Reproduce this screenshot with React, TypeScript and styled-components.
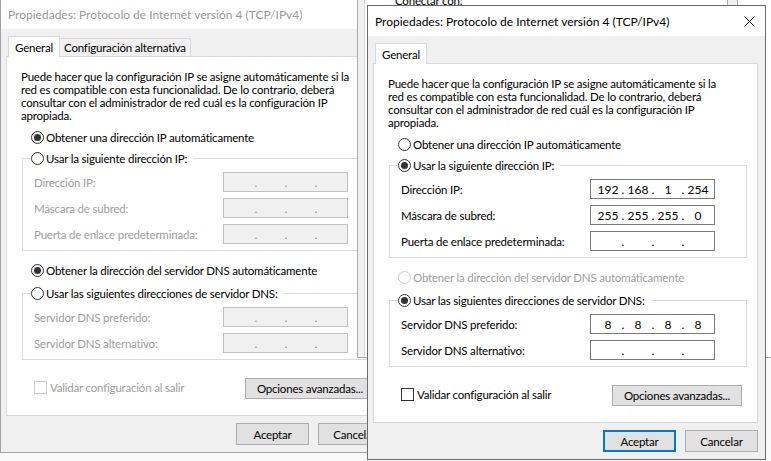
import React from "react";
import styled, { createGlobalStyle } from "styled-components";

const Global = createGlobalStyle`
  html, body { margin: 0; padding: 0; }
  body {
    width: 771px; height: 461px; overflow: hidden; background: #f9f9f9;
    font-family: Lato, "Noto Sans", sans-serif; font-size: 11.5px; letter-spacing: -0.2px; color: #000;
  }
  #root { width: 771px; height: 461px; }
`;

const Desktop = styled.div`
  position: relative;
  width: 771px;
  height: 461px;
  overflow: hidden;
`;

const Window = styled.div<{ $x: number; $y: number; $z: number; $active?: boolean }>`
  position: absolute;
  left: ${(p) => p.$x}px;
  top: ${(p) => p.$y}px;
  z-index: ${(p) => p.$z};
  width: 399px;
  height: 455px;
  box-sizing: border-box;
  border: 1px solid ${(p) => (p.$active ? "#6b6b6b" : "#a3a3a3")};
  background: #f0f0f0;
  display: flex;
  flex-direction: column;
`;

const TitleBar = styled.div<{ $active?: boolean }>`
  flex: none;
  height: 30px;
  background: #fff;
  display: flex;
  align-items: center;
  padding: 0 10px 0 7px;
  font-size: 12px;
  letter-spacing: 0;
  color: ${(p) => (p.$active ? "#000" : "#9a9a9a")};
  white-space: nowrap;
`;

const TitleText = styled.span`
  flex: 1;
`;

const Body = styled.div`
  flex: 1;
  display: flex;
  flex-direction: column;
  padding: 7px 7px 0 5px;
`;

const TabStrip = styled.div`
  display: flex;
  align-items: flex-end;
  height: 21px;
  margin-bottom: -1px;
  padding-left: 2px;
  position: relative;
  z-index: 1;
`;

const Tab = styled.div<{ $selected?: boolean }>`
  box-sizing: border-box;
  display: flex;
  align-items: center;
  white-space: nowrap;
  border: 1px solid #d9d9d9;
  ${(p) =>
    p.$selected
      ? `height: 21px; padding: 0 6px; background: #fff; border-bottom: none;`
      : `height: 18px; margin-bottom: 1px; padding: 0 4px; background: #f0f0f0; border-left: none; border-bottom: none;`}
`;

const Panel = styled.div`
  height: 360px;
  box-sizing: border-box;
  background: #fff;
  border: 1px solid #d9d9d9;
  padding: 13px 10px 0 14px;
  display: flex;
  flex-direction: column;
`;

const Description = styled.p`
  margin: 0;
  line-height: 13px;
  white-space: nowrap;
`;

const OptionLine = styled.div<{ $mt: number }>`
  margin: ${(p) => p.$mt}px 0 0 10px;
`;

const RadioRow = styled.div<{ $disabled?: boolean }>`
  display: flex;
  align-items: center;
  gap: 2px;
  height: 16px;
  white-space: nowrap;
  color: ${(p) => (p.$disabled ? "#a0a0a0" : "#000")};
`;

const RadioCircle = styled.span<{ $disabled?: boolean }>`
  flex: none;
  box-sizing: border-box;
  width: 13px;
  height: 13px;
  border-radius: 50%;
  border: 1px solid ${(p) => (p.$disabled ? "#cccccc" : "#333333")};
  background: #fff;
  display: flex;
  align-items: center;
  justify-content: center;
`;

const RadioDot = styled.span`
  width: 7px;
  height: 7px;
  border-radius: 50%;
  background: #333;
`;

const Group = styled.fieldset<{ $mt: number }>`
  margin: ${(p) => p.$mt}px 0 0 1px;
  padding: 0;
  border: 1px solid #dcdcdc;
  min-width: 0;
`;

const GroupLegend = styled.legend`
  margin-left: 8px;
  padding: 0 6px 0 0;
`;

const FieldGrid = styled.div`
  display: grid;
  grid-template-columns: 189px 125px;
  grid-auto-rows: 20px;
  row-gap: 6px;
  align-items: center;
  margin-top: 6px;
  padding: 0 0 6px 11px;
`;

const FieldLabel = styled.span<{ $disabled?: boolean }>`
  white-space: nowrap;
  color: ${(p) => (p.$disabled ? "#a0a0a0" : "#000")};
`;

const IpBox = styled.div<{ $disabled?: boolean }>`
  box-sizing: border-box;
  width: 125px;
  height: 20px;
  display: flex;
  align-items: center;
  padding-left: 4px;
  border: 1px solid ${(p) => (p.$disabled ? "#c2c2c2" : "#7a7a7a")};
  background: ${(p) => (p.$disabled ? "#f0f0f0" : "#fff")};
  color: ${(p) => (p.$disabled ? "#8a8a8a" : "#000")};
  font-size: 12px;
  letter-spacing: 0;
`;

const Octet = styled.span`
  width: 26px;
  text-align: center;
`;

const Dot = styled.span`
  width: 4px;
  text-align: center;
`;

const FooterRow = styled.div`
  display: flex;
  align-items: center;
  justify-content: space-between;
  margin: 18px 5px 0 13px;
`;

const CheckRow = styled.div<{ $disabled?: boolean }>`
  display: flex;
  align-items: center;
  gap: 3px;
  white-space: nowrap;
  margin-top: -2px;
  color: ${(p) => (p.$disabled ? "#a0a0a0" : "#000")};
`;

const CheckBox = styled.span<{ $disabled?: boolean }>`
  box-sizing: border-box;
  width: 13px;
  height: 13px;
  border: 1px solid ${(p) => (p.$disabled ? "#cccccc" : "#333333")};
  background: #fff;
`;

const Button = styled.div<{ $w: number; $h: number; $default?: boolean }>`
  box-sizing: border-box;
  width: ${(p) => p.$w}px;
  height: ${(p) => p.$h}px;
  display: flex;
  align-items: center;
  justify-content: center;
  white-space: nowrap;
  background: #e1e1e1;
  border: ${(p) => (p.$default ? "2px solid #0078d7" : "1px solid #adadad")};
`;

const ButtonRow = styled.div`
  display: flex;
  justify-content: flex-end;
  gap: 9px;
  margin-top: 7px;
`;

/* window lying between the two dialogs */
const BackWindow = styled.div`
  position: absolute;
  left: 357px;
  top: -60px;
  z-index: 2;
  width: 430px;
  height: 418px;
  box-sizing: border-box;
  border: 1px solid #aaaaaa;
  background: #f0f0f0;
  padding-left: 6px;
  display: flex;
`;

const BackPanel = styled.div`
  flex: 1;
  background: #fff;
  border-left: 1px solid #d9d9d9;
  padding: 53px 0 0 30px;
`;

const BackRow = styled.div`
  display: grid;
  grid-template-columns: 332px 11px;
  align-items: end;
`;

const BackLabel = styled.span`
  line-height: 13px;
`;

const BackScroll = styled.span`
  box-sizing: border-box;
  height: 24px;
  margin-bottom: -11px;
  border-left: 1px solid #adadad;
  border-right: 1px solid #adadad;
  background: #f0f0f0;
`;

function Radio({ checked, disabled, label }: { checked: boolean; disabled?: boolean; label: string }) {
  return (
    <RadioRow $disabled={disabled}>
      <RadioCircle $disabled={disabled}>{checked && <RadioDot />}</RadioCircle>
      <span>{label}</span>
    </RadioRow>
  );
}

function IpField({ value, disabled }: { value: string[] | null; disabled?: boolean }) {
  const v = value ?? ["", "", "", ""];
  return (
    <IpBox $disabled={disabled}>
      {v.map((o, i) => (
        <React.Fragment key={i}>
          <Octet>{o}</Octet>
          {i < 3 && <Dot>.</Dot>}
        </React.Fragment>
      ))}
    </IpBox>
  );
}

interface Row {
  label: string;
  value: string[] | null;
}

interface DialogProps {
  x: number;
  y: number;
  z: number;
  active?: boolean;
  tabs: { label: string; selected?: boolean }[];
  ipAuto: boolean;
  ipRows: Row[];
  dnsAuto: boolean;
  dnsAutoDisabled?: boolean;
  dnsRows: Row[];
  checkDisabled?: boolean;
}

function Dialog(p: DialogProps) {
  const ipFieldsDisabled = p.ipAuto;
  const dnsFieldsDisabled = p.dnsAuto;
  return (
    <Window $x={p.x} $y={p.y} $z={p.z} $active={p.active}>
      <TitleBar $active={p.active}>
        <TitleText>Propiedades: Protocolo de Internet versión 4 (TCP/IPv4)</TitleText>
        <svg width="11" height="11" viewBox="0 0 11 11">
          <path d="M0.5 0.5L10.5 10.5M10.5 0.5L0.5 10.5" stroke={p.active ? "#000" : "#999"} strokeWidth="1" fill="none" />
        </svg>
      </TitleBar>
      <Body>
        <TabStrip>
          {p.tabs.map((t) => (
            <Tab key={t.label} $selected={t.selected}>
              {t.label}
            </Tab>
          ))}
        </TabStrip>
        <Panel>
          <Description>
            Puede hacer que la configuración IP se asigne automáticamente si la
            <br />
            red es compatible con esta funcionalidad. De lo contrario, deberá
            <br />
            consultar con el administrador de red cuál es la configuración IP
            <br />
            apropiada.
          </Description>
          <OptionLine $mt={7}>
            <Radio checked={p.ipAuto} label="Obtener una dirección IP automáticamente" />
          </OptionLine>
          <Group $mt={5}>
            <GroupLegend>
              <Radio checked={!p.ipAuto} label="Usar la siguiente dirección IP:" />
            </GroupLegend>
            <FieldGrid>
              {p.ipRows.map((r) => (
                <React.Fragment key={r.label}>
                  <FieldLabel $disabled={ipFieldsDisabled}>{r.label}</FieldLabel>
                  <IpField value={r.value} disabled={ipFieldsDisabled} />
                </React.Fragment>
              ))}
            </FieldGrid>
          </Group>
          <OptionLine $mt={11}>
            <Radio
              checked={p.dnsAuto}
              disabled={p.dnsAutoDisabled}
              label="Obtener la dirección del servidor DNS automáticamente"
            />
          </OptionLine>
          <Group $mt={7}>
            <GroupLegend>
              <Radio checked={!p.dnsAuto} label="Usar las siguientes direcciones de servidor DNS:" />
            </GroupLegend>
            <FieldGrid>
              {p.dnsRows.map((r) => (
                <React.Fragment key={r.label}>
                  <FieldLabel $disabled={dnsFieldsDisabled}>{r.label}</FieldLabel>
                  <IpField value={r.value} disabled={dnsFieldsDisabled} />
                </React.Fragment>
              ))}
            </FieldGrid>
          </Group>
          <FooterRow>
            <CheckRow $disabled={p.checkDisabled}>
              <CheckBox $disabled={p.checkDisabled} />
              <span>Validar configuración al salir</span>
            </CheckRow>
            <Button $w={130} $h={21}>
              Opciones avanzadas...
            </Button>
          </FooterRow>
        </Panel>
        <ButtonRow>
          <Button $w={73} $h={22} $default={p.active}>
            Aceptar
          </Button>
          <Button $w={73} $h={22}>
            Cancelar
          </Button>
        </ButtonRow>
      </Body>
    </Window>
  );
}

const ipLabels = ["Dirección IP:", "Máscara de subred:", "Puerta de enlace predeterminada:"];
const dnsLabels = ["Servidor DNS preferido:", "Servidor DNS alternativo:"];

export default function App() {
  return (
    <Desktop>
      <Global />
      <Dialog
        x={0}
        y={-2}
        z={1}
        tabs={[{ label: "General", selected: true }, { label: "Configuración alternativa" }]}
        ipAuto={true}
        ipRows={ipLabels.map((l) => ({ label: l, value: null }))}
        dnsAuto={true}
        dnsRows={dnsLabels.map((l) => ({ label: l, value: null }))}
        checkDisabled
      />
      <BackWindow>
        <BackPanel>
          <BackRow>
            <BackLabel>Conectar con:</BackLabel>
            <BackScroll />
          </BackRow>
        </BackPanel>
      </BackWindow>
      <Dialog
        x={367}
        y={5}
        z={3}
        active
        tabs={[{ label: "General", selected: true }]}
        ipAuto={false}
        ipRows={[
          { label: ipLabels[0], value: ["192", "168", "1", "254"] },
          { label: ipLabels[1], value: ["255", "255", "255", "0"] },
          { label: ipLabels[2], value: null },
        ]}
        dnsAuto={false}
        dnsAutoDisabled
        dnsRows={[
          { label: dnsLabels[0], value: ["8", "8", "8", "8"] },
          { label: dnsLabels[1], value: null },
        ]}
      />
    </Desktop>
  );
}
